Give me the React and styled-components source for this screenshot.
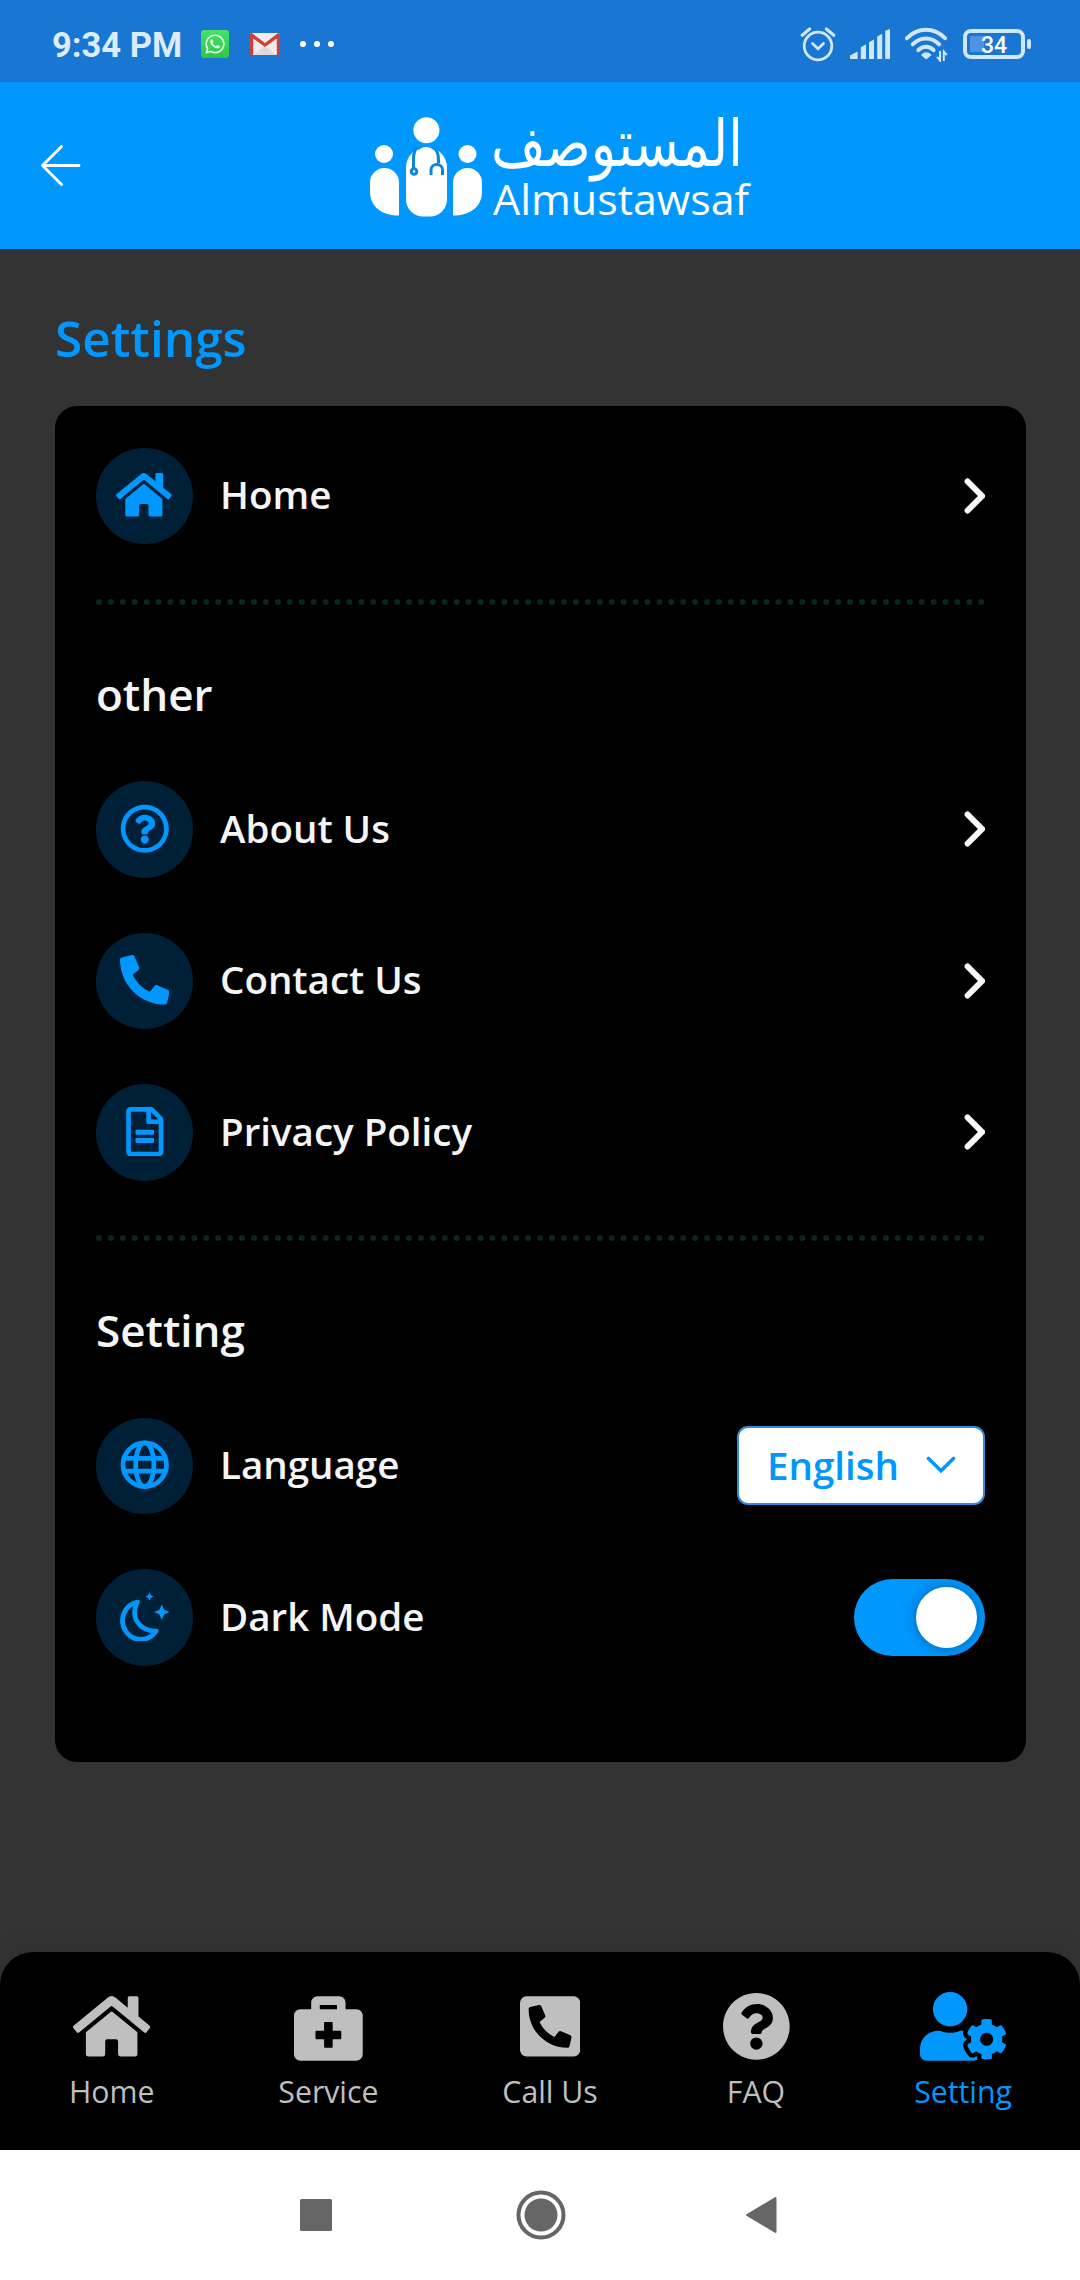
import { useState } from "react";
import styled, { createGlobalStyle } from "styled-components";
import {
  FaHome,
  FaRegQuestionCircle,
  FaPhoneAlt,
  FaRegFileAlt,
  FaBriefcaseMedical,
  FaPhoneSquareAlt,
  FaQuestionCircle,
  FaUserCog,
  FaWhatsapp,
} from "react-icons/fa";

const BLUE = "#0098ff";

const AlarmIcon = () => (
  <svg width="36" height="36" viewBox="0 0 36 36" fill="none" stroke="#cfe6fb">
    <circle cx="18" cy="20" r="13.8" strokeWidth="2.8" />
    <path d="M12.5 17.5l5.5 5.2 5.5-5.2" strokeWidth="2.8" strokeLinecap="round" />
    <path d="M2.2 9.2L9.6 3M33.8 9.2L26.4 3" strokeWidth="3.2" strokeLinecap="round" />
  </svg>
);

const SignalIcon = () => (
  <svg width="40" height="30" viewBox="0 0 40 30" fill="#cfe6fb">
    <path d="M0 26.6L7.6 22.6V30H0zM10.8 18.3l5.2-3V30h-5.2zM19 13.2l5-2.8V30h-5zM27.2 7.5l5-2.8V30h-5zM35.2 1.8L40 0v30h-4.8z" />
  </svg>
);

const WifiIcon = () => (
  <svg width="43" height="36" viewBox="0 0 43 36" fill="none" stroke="#cfe6fb">
    <path d="M2 12.2C13 1 29 1 40 12.2" strokeWidth="4" strokeLinecap="round" />
    <path d="M7.7 18.4c7.5-8 19-8 26.5 0" strokeWidth="4" strokeLinecap="round" />
    <path d="M13.3 24.2c4.5-4.6 10.8-4.6 15.3 0" strokeWidth="4" strokeLinecap="round" />
    <path d="M17 29c2.5-2.6 6-2.6 8.5 0L21.2 32.5z" fill="#cfe6fb" strokeWidth="1.5" />
    <path d="M35 25v9.5l-3-3.6M38.8 35v-9.5l3 3.6" strokeWidth="2" />
  </svg>
);

const GmailIcon = () => (
  <svg width="30" height="22" viewBox="0 0 30 22">
    <rect width="30" height="22" rx="1.5" fill="#f1ecec" />
    <path d="M3 22l12-9 12 9z" fill="#dedada" />
    <path
      d="M0 1.5C0 .5.8 0 1.8 0L15 10 28.2 0c1 0 1.8.5 1.8 1.5V22h-3.2V5.5L15 14 3.2 5.5V22H0z"
      fill="#d23f3a"
    />
  </svg>
);

const ArrowIcon = () => (
  <svg width="40" height="42" viewBox="0 0 40 42" fill="none" stroke="#fff" strokeWidth="2.9">
    <path d="M38 20.5H1.5M20.5 1.5l-19 19 19 19" strokeLinecap="round" />
  </svg>
);

const Logo = () => (
  <LogoSvg width="390" height="112" viewBox="0 0 390 112" fill="#fff">
    <circle cx="16" cy="44" r="9" />
    <path d="M2 72.5a14.5 14.5 0 0 1 29 0v33C15 105.5 2 97.5 2 81.5z" />
    <circle cx="58.4" cy="20.3" r="13" />
    <path d="M38 57.5a20.5 20.5 0 0 1 41 0v32a17 17 0 0 1-17 17h-7a17 17 0 0 1-17-17z" />
    <circle cx="99.5" cy="44" r="9" />
    <path d="M85 72.5a14.5 14.5 0 0 1 29 0v9c0 16-13 24-29 24z" />
    <g fill="none" stroke="#0b86dc" strokeWidth="3">
      <path d="M50 37.5c-4 2-4.5 6-4.5 12v9M65 37.5c4 2 5.5 6 5.5 13v3" />
      <circle cx="46" cy="61.5" r="2.8" />
      <path d="M63 65v-5c0-7.5 11.500-7.500 11.500 0v5" />
    </g>
    <path d="M49.5 39.500q8.500-8 17 0" fill="none" stroke={BLUE} strokeWidth="2" />
    <text
      x="325"
      y="47"
      direction="rtl"
      transform="translate(50 0) scale(1 1.2)"
      fontFamily="'DejaVu Sans', sans-serif"
      fontSize="54"
      textLength="252"
      lengthAdjust="spacingAndGlyphs"
    >
      المستوصف
    </text>
    <text
      x="125"
      y="104.5"
      fontFamily="'Open Sans', sans-serif"
      fontSize="41.5"
      textLength="256"
      lengthAdjust="spacingAndGlyphs"
    >
      Almustawsaf
    </text>
  </LogoSvg>
);

const GlobeIcon = () => (
  <svg width="50" height="50" viewBox="0 0 50 50" fill="none" stroke={BLUE} strokeWidth="4.8">
    <circle cx="25" cy="25" r="22" />
    <ellipse cx="25" cy="25" rx="9.2" ry="22" />
    <path d="M4 18.5h42M4 31.5h42" />
  </svg>
);

const MoonIcon = () => (
  <svg width="50" height="50" viewBox="0 -1 50 50">
    <path
      d="M17.5 9.2A18.5 19 0 1 0 36.5 38.4C24 39 8.5 28 17.5 9.2z"
      fill="none"
      stroke={BLUE}
      strokeWidth="4.8"
      strokeLinejoin="round"
    />
    <path d="M29.8-.8l1.3 3 3 1.3-3 1.3-1.3 3-1.3-3-3-1.3 3-1.3z" fill={BLUE} />
    <path d="M42.2 11.5l2.4 5.4 5.4 2.4-5.4 2.4-2.4 5.4-2.4-5.4-5.4-2.4 5.4-2.4z" fill={BLUE} />
  </svg>
);

const ChevronIcon = () => (
  <svg width="21" height="36" viewBox="0 0 21 36" fill="none" stroke="#f8f8f8" strokeWidth="6">
    <path d="M3.6 3.5L18 18 3.6 32.5" strokeLinecap="round" />
  </svg>
);

const others = [
  { label: "About Us", icon: <FaRegQuestionCircle /> },
  { label: "Contact Us", icon: <FaPhoneAlt /> },
  { label: "Privacy Policy", icon: <FaRegFileAlt /> },
];

const tabs = [
  { label: "Home", icon: <FaHome />, width: 77.3 },
  { label: "Service", icon: <FaBriefcaseMedical />, width: 68.75 },
  { label: "Call Us", icon: <FaPhoneSquareAlt />, width: 60.2 },
  { label: "FAQ", icon: <FaQuestionCircle />, width: 68.75 },
  { label: "Setting", icon: <FaUserCog />, width: 86 },
];

const App = () => {
  const [dark, setDark] = useState(true);
  const [active, setActive] = useState("Setting");

  return (
    <>
      <GlobalStyle />
      <Screen>
        <StatusBar>
          <StatusGroup>
            <Time>9:34 PM</Time>
            <WhatsappBadge>
              <FaWhatsapp />
            </WhatsappBadge>
            <GmailIcon />
            <Dots>
              <i />
              <i />
              <i />
            </Dots>
          </StatusGroup>
          <StatusRight>
            <AlarmIcon />
            <SignalIcon />
            <WifiIcon />
            <Battery>34</Battery>
          </StatusRight>
        </StatusBar>

        <Header>
          <BackButton>
            <ArrowIcon />
          </BackButton>
          <Logo />
        </Header>

        <Content>
          <Title>Settings</Title>
          <Card>
            <Row>
              <IconCircle $wide>
                <FaHome />
              </IconCircle>
              <RowLabel>Home</RowLabel>
              <ChevronIcon />
            </Row>
            <Divider />
            <SectionTitle>other</SectionTitle>
            <Rows>
              {others.map((item) => (
                <Row key={item.label}>
                  <IconCircle>{item.icon}</IconCircle>
                  <RowLabel>{item.label}</RowLabel>
                  <ChevronIcon />
                </Row>
              ))}
            </Rows>
            <Divider />
            <SectionTitle>Setting</SectionTitle>
            <Rows>
              <Row>
                <IconCircle>
                  <GlobeIcon />
                </IconCircle>
                <RowLabel>Language</RowLabel>
                <Select>
                  English
                  <svg width="30" height="18" viewBox="0 0 30 18" fill="none" stroke={BLUE} strokeWidth="3.6">
                    <path d="M2.5 2.5L15 14.8 27.5 2.5" strokeLinecap="round" />
                  </svg>
                </Select>
              </Row>
              <Row>
                <IconCircle>
                  <MoonIcon />
                </IconCircle>
                <RowLabel>Dark Mode</RowLabel>
                <Toggle $on={dark} onClick={() => setDark(!dark)}>
                  <Knob />
                </Toggle>
              </Row>
            </Rows>
          </Card>
        </Content>

        <TabBar>
          {tabs.map((tab) => (
            <Tab
              key={tab.label}
              $active={active === tab.label}
              $iconWidth={tab.width}
              onClick={() => setActive(tab.label)}
            >
              {tab.icon}
              <span>{tab.label}</span>
            </Tab>
          ))}
        </TabBar>

        <SystemNav>
          <svg width="32" height="32" viewBox="0 0 32 32" fill="#666">
            <rect width="32" height="32" rx="1.5" />
          </svg>
          <svg width="50" height="50" viewBox="0 0 50 50">
            <circle cx="25" cy="25" r="22.5" fill="none" stroke="#666" strokeWidth="4" />
            <circle cx="25" cy="25" r="16.5" fill="#666" />
          </svg>
          <svg
            width="32"
            height="38"
            viewBox="0 0 32 38"
            fill="#666"
            stroke="#666"
            strokeWidth="2"
            strokeLinejoin="round"
          >
            <path d="M2 19L30.5 2v34z" />
          </svg>
        </SystemNav>
      </Screen>
    </>
  );
};

const GlobalStyle = createGlobalStyle`
  * {
    box-sizing: border-box;
  }
  body {
    margin: 0;
    background: #333;
    font-family: "Open Sans", sans-serif;
  }
  svg {
    display: block;
    flex-shrink: 0;
  }
`;

const Screen = styled.div`
  width: 1080px;
  height: 2280px;
  display: flex;
  flex-direction: column;
  background: #333;
  overflow: hidden;
`;

const StatusBar = styled.div`
  height: 82px;
  padding: 6px 55px 0 52px;
  display: flex;
  align-items: center;
  justify-content: space-between;
  background: #1976d2;
`;

const StatusGroup = styled.div`
  display: flex;
  align-items: center;
`;

const StatusRight = styled(StatusGroup)`
  gap: 15px;

  svg:first-child {
    margin-right: -1px;
  }
`;

const Time = styled.div`
  width: 149px;
  padding-top: 2px;
  font-family: Roboto, sans-serif;
  font-size: 34.5px;
  font-weight: 700;
  line-height: 40px;
  color: #dcecfc;
`;

const WhatsappBadge = styled.div`
  width: 28px;
  height: 28px;
  margin-right: 21px;
  display: flex;
  align-items: center;
  justify-content: center;
  border-radius: 3px;
  background: linear-gradient(#45e466, #2bc746);
  color: #f0fff2;
  font-size: 22px;
`;

const Dots = styled.div`
  display: flex;
  gap: 8px;
  margin-left: 20px;

  i {
    width: 6px;
    height: 6px;
    border-radius: 50%;
    background: #fff;
  }
`;

const Battery = styled.div`
  position: relative;
  width: 62px;
  height: 30px;
  border: 4px solid #cfe6fb;
  border-radius: 8px;
  background: linear-gradient(#4c94e3, #4c94e3) 3px 50% / 14px 16px no-repeat;
  color: #fff;
  font-family: Roboto, sans-serif;
  font-size: 23px;
  font-weight: 500;
  line-height: 25px;
  text-align: center;

  &::after {
    content: "";
    position: absolute;
    top: 6px;
    right: -10px;
    width: 4px;
    height: 10px;
    border-radius: 2px;
    background: #cfe6fb;
  }
`;

const Header = styled.header`
  height: 167px;
  padding: 0 41px;
  display: flex;
  align-items: center;
  background: ${BLUE};
`;

const LogoSvg = styled.svg`
  overflow: visible;
`;

const BackButton = styled.button`
  margin-right: 287px;
  padding: 0;
  border: 0;
  background: none;
`;

const Content = styled.main`
  flex: 1;
  padding: 55px 54px 0 55px;
`;

const Title = styled.h1`
  margin: 0 0 34px;
  font-size: 49.5px;
  font-weight: 600;
  line-height: 68px;
  color: ${BLUE};
`;

const Card = styled.section`
  height: 1356px;
  padding: 41.5px 41px;
  border-radius: 22px;
  background: #000;
`;

const Rows = styled.div`
  display: flex;
  flex-direction: column;
  gap: 55px;
`;

const Row = styled.div`
  height: 96.5px;
  display: flex;
  align-items: center;
`;

const IconCircle = styled.div`
  width: 96.5px;
  height: 96.5px;
  padding-bottom: 2px;
  display: flex;
  align-items: center;
  justify-content: center;
  border-radius: 50%;
  background: #002037;
  color: ${BLUE};

  svg {
    width: ${(props) => (props.$wide ? "55.7px" : "49.5px")};
    height: 49.5px;
  }
`;

const RowLabel = styled.div`
  flex: 1;
  margin-left: 27.5px;
  padding-bottom: 3px;
  font-size: 38.5px;
  font-weight: 600;
  line-height: 54px;
  color: #f5f5f5;
`;

const Divider = styled.div`
  margin-top: 54.5px;
  border-top: 6px dotted #0a2623;
`;

const SectionTitle = styled.h2`
  margin: 59px 0 57.5px;
  font-size: 44px;
  font-weight: 600;
  line-height: 60px;
  color: #f5f5f5;
`;

const Select = styled.button`
  width: 248px;
  height: 79px;
  padding: 0 27px 2px 28px;
  display: flex;
  align-items: center;
  justify-content: space-between;
  border: 2px solid #2a8fdd;
  border-radius: 11px;
  background: #fff;
  color: ${BLUE};
  font-family: inherit;
  font-size: 38.5px;
  font-weight: 600;
`;

const Toggle = styled.button`
  width: 131px;
  height: 77px;
  padding: 8px;
  display: flex;
  align-items: center;
  justify-content: ${(props) => (props.$on ? "flex-end" : "flex-start")};
  border: 0;
  border-radius: 39px;
  background: ${(props) => (props.$on ? BLUE : "#777")};
`;

const Knob = styled.span`
  width: 61.5px;
  height: 61.5px;
  border-radius: 50%;
  background: #fff;
  box-shadow: 0 0 14px rgba(0, 0, 0, 0.35);
`;

const TabBar = styled.nav`
  height: 198px;
  padding: 40px 68px 0 69px;
  display: flex;
  justify-content: space-between;
  align-items: flex-start;
  border-radius: 33px 33px 0 0;
  background: #000;
  box-shadow: 0 0 28px rgba(0, 0, 0, 0.12);
`;

const Tab = styled.button`
  padding: 0;
  display: flex;
  flex-direction: column;
  align-items: center;
  border: 0;
  background: none;
  color: ${(props) => (props.$active ? BLUE : "#bfbfbf")};
  font-family: inherit;
  font-size: 30.25px;
  line-height: 42px;

  svg {
    width: ${(props) => props.$iconWidth}px;
    height: 68.75px;
    margin-bottom: 10px;
  }
`;

const SystemNav = styled.div`
  height: 130px;
  padding-left: 300px;
  display: flex;
  align-items: center;
  gap: 183.5px;
  background: #fff;

  svg:last-child {
    margin-left: -4px;
  }
`;

export default App;
